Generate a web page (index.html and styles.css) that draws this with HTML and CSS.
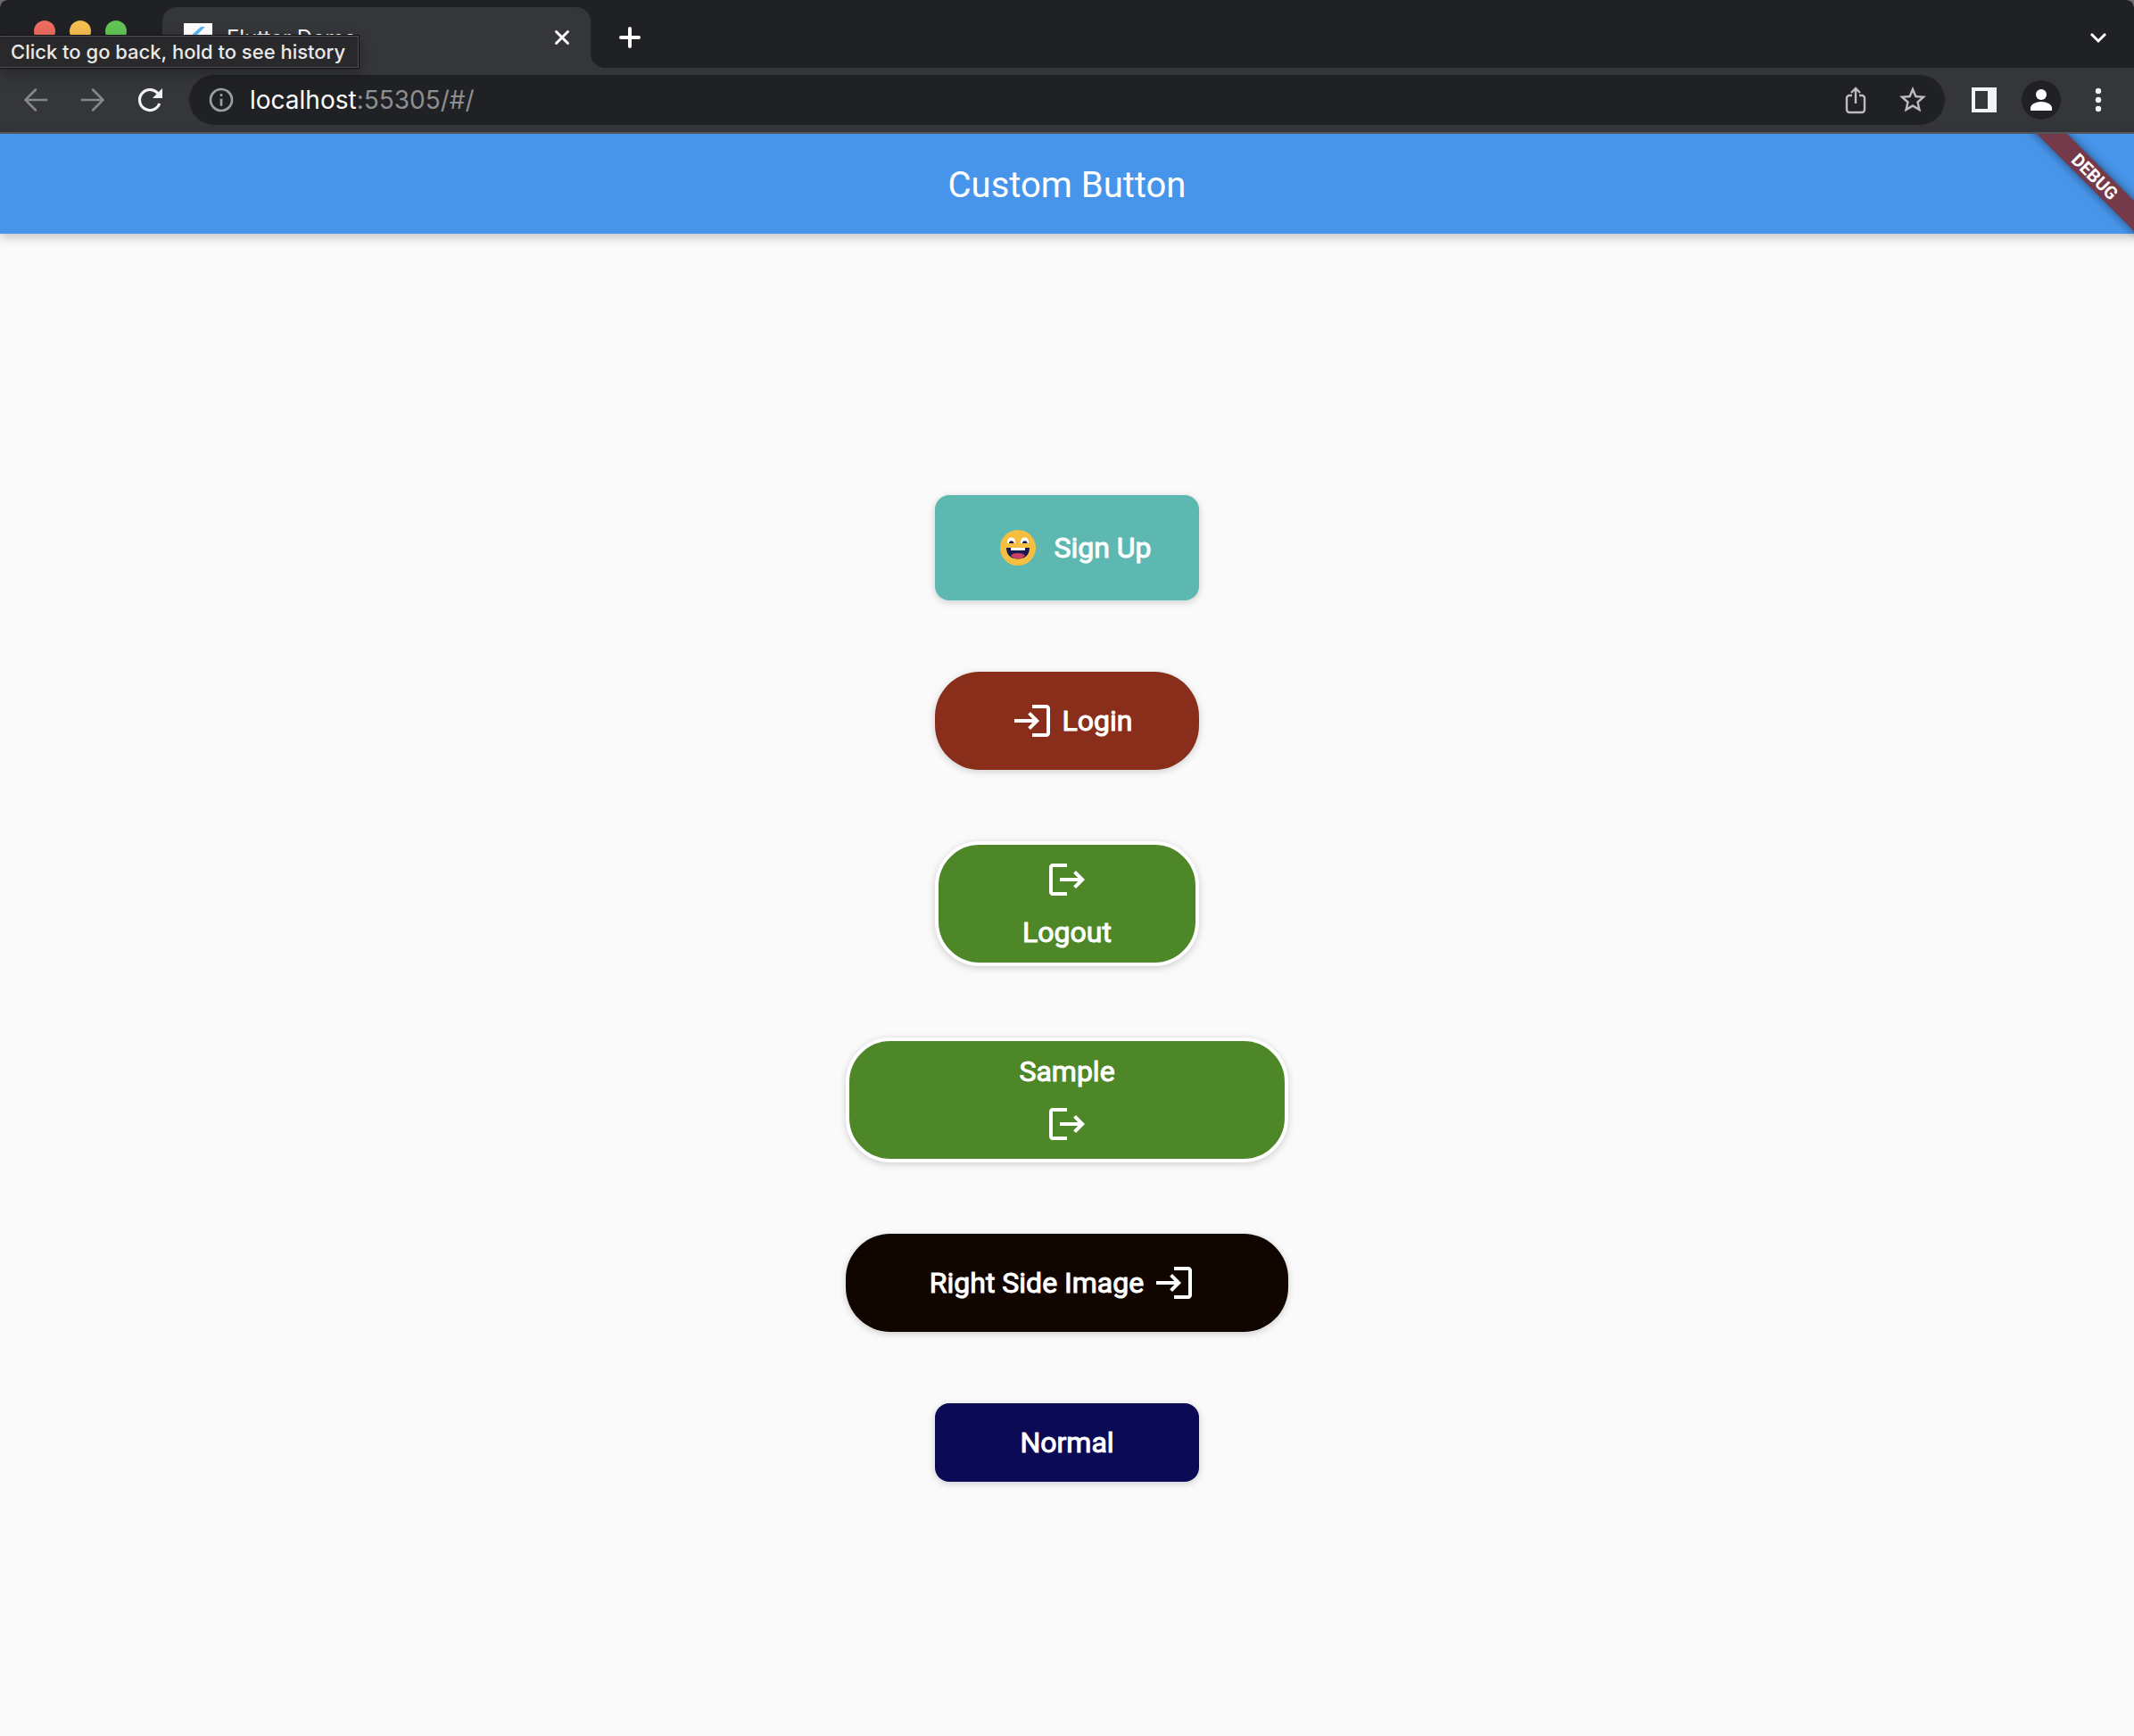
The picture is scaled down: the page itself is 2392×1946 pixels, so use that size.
FILE: index.html
```html
<!DOCTYPE html>
<html lang="en">
<head>
<meta charset="utf-8">
<title>Custom Button</title>
<link rel="stylesheet" href="styles.css">
</head>
<body>
<div class="window">
  <header class="tabstrip">
    <div class="lights"><span class="light red"></span><span class="light yellow"></span><span class="light green"></span></div>
    <div class="tab">
      <svg class="favicon" viewBox="0 0 32 32"><rect width="32" height="32" fill="#fff"/><path d="M19 4h5L9 19l-3-3z" fill="#5cb8f0"/><path d="M19 14h5l-7 7 7 7h-5l-7-7z" fill="#2a7fc9"/></svg>
      <span class="tab-title">Flutter Demo</span>
      <button class="tab-close" aria-label="Close tab"><svg width="32" height="32" viewBox="0 0 32 32" fill="none" stroke="#fff" stroke-width="3" stroke-linecap="round"><path d="M9.500 9.500l13 13M22.500 9.500l-13 13"/></svg></button>
    </div>
    <button class="icon-button" aria-label="New tab"><svg width="32" height="32" viewBox="0 0 32 32" stroke="#fff" stroke-width="4" stroke-linecap="round"><path d="M6 16h20M16 6v20"/></svg></button>
    <button class="icon-button search-tabs" aria-label="Search tabs"><svg width="32" height="32" viewBox="0 0 32 32" fill="none" stroke="#fff" stroke-width="3"><path d="M8 12l8 8 8-8"/></svg></button>
    <div class="tooltip" role="tooltip">Click to go back, hold to see history</div>
  </header>
  <nav class="toolbar">
    <div class="group">
      <button class="icon-button" aria-label="Back"><svg width="32" height="32" viewBox="0 0 32 32" fill="none" stroke="#86878a" stroke-width="2.600" stroke-linecap="round"><path d="M28 16H4.500M16 4.500L4.500 16 16 27.500"/></svg></button>
      <button class="icon-button" aria-label="Forward"><svg width="32" height="32" viewBox="0 0 32 32" fill="none" stroke="#86878a" stroke-width="2.600" stroke-linecap="round"><path d="M4 16h23.500M16 4.500L27.500 16 16 27.500"/></svg></button>
      <button class="icon-button" aria-label="Reload"><svg width="32" height="32" viewBox="0 0 32 32" fill="none"><path d="M25.800 10A11.500 11.500 0 1 0 26.800 20" stroke="#f1f3f4" stroke-width="3.200"/><path d="M30 3v11H19z" fill="#f1f3f4"/></svg></button>
    </div>
    <div class="omnibox">
      <svg width="32" height="32" viewBox="0 0 24 24" fill="#9aa0a6"><path d="M11 7h2v2h-2zm0 4h2v6h-2zm1-9a10 10 0 1 0 0 20 10 10 0 0 0 0-20zm0 18a8 8 0 1 1 0-16 8 8 0 0 1 0 16z"/></svg>
      <div class="address" role="textbox" aria-label="Address"><span class="host">localhost</span>:55305/#/</div>
      <div class="group">
        <button class="icon-button" aria-label="Share"><svg width="32" height="32" viewBox="0 0 32 32" fill="none" stroke="#bdbdbe" stroke-width="2.400"><path d="M12 11H9a3 3 0 0 0-3 3v13a3 3 0 0 0 3 3h14a3 3 0 0 0 3-3V14a3 3 0 0 0-3-3h-3M16 20V3M11 8l5-5 5 5"/></svg></button>
        <button class="icon-button" aria-label="Bookmark"><svg width="36" height="36" viewBox="0 0 24 24" fill="#bdbdbe"><path d="M22 9.240l-7.190-.62L12 2 9.190 8.630 2 9.240l5.460 4.730L5.820 21 12 17.270 18.180 21l-1.630-7.030L22 9.240zM12 15.400l-3.760 2.270 1-4.280-3.320-2.880 4.380-.38L12 6.100l1.710 4.040 4.380.38-3.320 2.880 1 4.280L12 15.400z"/></svg></button>
      </div>
    </div>
    <div class="group">
      <button class="icon-button" aria-label="Side panel"><svg width="28" height="28" viewBox="0 0 28 28" fill="#f1f3f4"><path fill-rule="evenodd" d="M0 0h28v28H0zM4 4v20h14V4z"/></svg></button>
      <button class="icon-button" aria-label="Profile"><svg width="44" height="44" viewBox="0 0 44 44"><circle cx="22" cy="22" r="22" fill="#202124"/><g fill="#fff"><circle cx="22" cy="16" r="6"/><path d="M10 34v-3c0-4 6-7 12-7s12 3 12 7v3z"/></g></svg></button>
      <button class="icon-button" aria-label="Menu"><svg width="32" height="32" viewBox="0 0 32 32" fill="#f1f3f4"><circle cx="16" cy="6" r="3.200"/><circle cx="16" cy="16" r="3.200"/><circle cx="16" cy="26" r="3.200"/></svg></button>
    </div>
  </nav>
  <div class="appbar">
    <h1 class="title">Custom Button</h1>
    <div class="banner-corner"><span class="banner">DEBUG</span></div>
  </div>
  <main class="content">
    <button class="btn square teal">
      <svg class="emoji" viewBox="0 0 40 40"><circle cx="20" cy="20" r="20" fill="#f6bf41"/><path d="M8 15v-2a4.500 4.500 0 0 1 9 0v2zM23 15v-2a4.500 4.500 0 0 1 9 0v2z" fill="#fff"/><path d="M10 15v-1a3 3 0 0 1 5.500 0v1zM25 15v-1a3 3 0 0 1 5.500 0v1z" fill="#16194f"/><path d="M7 20h26c0 8-5 12.500-13 12.500S7 28 7 20z" fill="#16194f"/><path d="M12 20h16v3H12z" fill="#fff"/><path d="M12 29c1-2 4-3 8-3s7 1 8 3c-2 2.500-5 3.500-8 3.500s-6-1-8-3.500z" fill="#cb3e65"/></svg>
      <span>Sign Up</span>
    </button>
    <button class="btn round brown">
      <svg class="glyph lead" viewBox="0 0 24 24"><path d="M11 7L9.600 8.400l2.600 2.600H2v2h10.200l-2.600 2.600L11 17l5-5-5-5zm9 12h-8v2h8c1.100 0 2-.9 2-2V5c0-1.100-.9-2-2-2h-8v2h8v14z"/></svg>
      <span>Login</span>
    </button>
    <button class="btn round stacked green-fill">
      <svg class="glyph" viewBox="0 0 24 24"><path d="M17 7l-1.410 1.410L18.170 11H8v2h10.170l-2.580 2.580L17 17l5-5zM4 5h8V3H4c-1.100 0-2 .9-2 2v14c0 1.100.9 2 2 2h8v-2H4V5z"/></svg>
      <span>Logout</span>
    </button>
    <button class="btn round stacked wide green-fill">
      <span>Sample</span>
      <svg class="glyph" viewBox="0 0 24 24"><path d="M17 7l-1.410 1.410L18.170 11H8v2h10.170l-2.580 2.580L17 17l5-5zM4 5h8V3H4c-1.100 0-2 .9-2 2v14c0 1.100.9 2 2 2h8v-2H4V5z"/></svg>
    </button>
    <button class="btn round wide black">
      <span>Right Side Image</span>
      <svg class="glyph lead" viewBox="0 0 24 24"><path d="M11 7L9.600 8.400l2.600 2.600H2v2h10.200l-2.600 2.600L11 17l5-5-5-5zm9 12h-8v2h8c1.100 0 2-.9 2-2V5c0-1.100-.9-2-2-2h-8v2h8v14z"/></svg>
    </button>
    <button class="btn square short navy"><span>Normal</span></button>
  </main>
</div>
</body>
</html>
```
FILE: styles.css
```css
* { box-sizing: border-box; }

html { background: #6b6c6f; }

body {
  margin: 0;
  font-family: Roboto, sans-serif;
}

button {
  margin: 0;
  padding: 0;
  border: 0;
  background: none;
  color: inherit;
  font: inherit;
  cursor: pointer;
}

svg { display: block; flex: none; }

.window {
  display: flex;
  flex-direction: column;
  min-height: 100vh;
  background: #fafafa;
  border-radius: 8px 8px 0 0;
  overflow: hidden;
}

/* Browser chrome */
.tabstrip,
.toolbar {
  font-family: Inter, "Liberation Sans", sans-serif;
}

.tabstrip {
  position: relative;
  display: flex;
  align-items: center;
  height: 76px;
  padding: 8px 16px 0 38px;
  background: #202124;
}

.lights {
  display: flex;
  gap: 16px;
  align-self: flex-start;
  margin: 15px 40px 0 0;
}

.light {
  width: 24px;
  height: 24px;
  border-radius: 50%;
}

.red { background: #ec6a5e; }
.yellow { background: #f4bd4f; }
.green { background: #61c354; }

.tab {
  position: relative;
  display: flex;
  align-items: center;
  gap: 16px;
  width: 480px;
  height: 68px;
  padding: 0 16px 0 24px;
  background: #35363a;
  border-radius: 16px 16px 0 0;
}

/* flared foot joining the tab to the toolbar */
.tab::before,
.tab::after {
  content: "";
  position: absolute;
  bottom: 0;
  width: 16px;
  height: 16px;
}

.tab::before {
  right: 100%;
  background: radial-gradient(circle at 0 0, transparent 16px, #35363a 16px);
}

.tab::after {
  left: 100%;
  background: radial-gradient(circle at 100% 0, transparent 16px, #35363a 16px);
}

.favicon { width: 32px; height: 32px; }

.tab-title {
  flex: 1;
  color: #f1f3f4;
  font-size: 24px;
}

.icon-button {
  display: flex;
  align-items: center;
  justify-content: center;
  width: 48px;
  height: 48px;
}

.tab + .icon-button { margin-left: 20px; }

.search-tabs { margin-left: auto; }

.tooltip {
  position: absolute;
  z-index: 2;
  top: 40px;
  left: 0;
  height: 36px;
  padding: 0 14px 0 12px;
  background: #29292b;
  border: 1px solid #505153;
  border-left: 0;
  box-shadow: 0 0 0 1px #111, 0 6px 16px rgba(0, 0, 0, 0.3);
  color: #e8e8e8;
  font-size: 22px;
  font-weight: 500;
  line-height: 34px;
  white-space: nowrap;
}

.toolbar {
  display: flex;
  align-items: center;
  gap: 20px;
  height: 74px;
  padding: 0 16px;
  background: #35363a;
  border-bottom: 2px solid #5b5c60;
}

.group { display: flex; gap: 16px; }

.omnibox {
  display: flex;
  flex: 1;
  align-items: center;
  gap: 16px;
  height: 56px;
  padding: 0 12px 0 20px;
  background: #202124;
  border-radius: 28px;
}

.address {
  flex: 1;
  color: #8e8f91;
  font-size: 28px;
}

.host { color: #fff; }

/* Application */
.appbar {
  position: relative;
  display: flex;
  align-items: center;
  justify-content: center;
  height: 112px;
  padding-top: 2px;
  background: #4795eb;
  box-shadow: 0 2px 12px rgba(0, 0, 0, 0.2), 0 6px 10px rgba(0, 0, 0, 0.06);
}

.title {
  margin: 0;
  color: #fff;
  font-size: 40px;
  font-weight: 400;
}

.banner-corner {
  position: absolute;
  top: 0;
  right: 0;
  width: 160px;
  height: 128px;
  overflow: hidden;
}

.banner {
  position: absolute;
  top: 36px;
  right: -56px;
  width: 200px;
  height: 24px;
  background: #743a4a;
  box-shadow: 0 0 12px rgba(0, 0, 0, 0.5);
  color: #fff;
  font-size: 20px;
  font-weight: 700;
  line-height: 24px;
  text-align: center;
  transform: rotate(45deg);
}

.content {
  display: flex;
  flex: 1;
  flex-direction: column;
  align-items: center;
  justify-content: center;
  gap: 80px;
  padding-top: 8px;
}

.btn {
  display: flex;
  align-items: center;
  justify-content: center;
  width: 296px;
  height: 110px;
  color: #fff;
  font-size: 32px;
  line-height: 38px;
  white-space: nowrap;
  -webkit-text-stroke: 1px #fff;
  box-shadow: 0 2px 8px rgba(0, 0, 0, 0.18);
}

.square { height: 118px; border-radius: 16px; }
.short { height: 88px; }
.round { border-radius: 50px; }
.wide { width: 496px; }

.stacked {
  flex-direction: column;
  gap: 16px;
  height: 140px;
  border: 4px solid #fff;
}

.teal { background: #5db8b2; }
.brown { background: #882e1a; }
.green-fill { background: #4d8727; }
.black { background: #110500; }
.navy { background: #0b0a54; }

.glyph {
  width: 48px;
  height: 48px;
  fill: #fff;
  stroke: none;
}

.lead { margin: 0 10px; }

.emoji {
  width: 40px;
  height: 40px;
  margin: 0 20px;
  stroke: none;
}
```
